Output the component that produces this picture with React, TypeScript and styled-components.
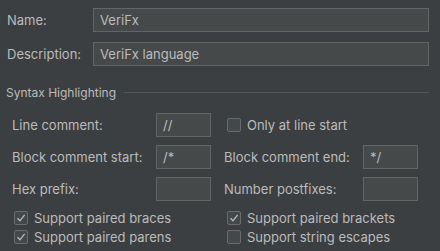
import React from "react";
import styled, { createGlobalStyle } from "styled-components";

const Global = createGlobalStyle`
  html, body { margin: 0; padding: 0; background: #3c3f41; }
  body { font-family: Inter, "Open Sans", sans-serif; color: #bbbbbb; }
  * { box-sizing: border-box; }
`;

const Page = styled.div`
  width: 440px;
  height: 251px;
  padding: 8px 11px 0 7px;
  display: flex;
  flex-direction: column;
  overflow: hidden;
`;

const TopForm = styled.div`
  display: grid;
  grid-template-columns: 86px 1fr;
  row-gap: 10px;
  align-items: center;
`;

const Label = styled.label`
  font-size: 13px;
  color: #bbbbbb;
  white-space: nowrap;
`;

const Field = styled.div<{ $w?: number }>`
  height: 24px;
  width: ${(p) => (p.$w ? `${p.$w}px` : "100%")};
  background: #45494a;
  border: 1px solid #646464;
  font-size: 13px;
  color: #bbbbbb;
  display: flex;
  align-items: center;
  padding: 0 6px;
`;

const SectionHeader = styled.div`
  display: flex;
  align-items: center;
  gap: 8px;
  margin: 18px 0 0 -1px;
  height: 16px;
  font-size: 12px;
  color: #bbbbbb;
`;

const Rule = styled.div`
  flex: 1;
  height: 1px;
  background: #535658;
`;

const Grid = styled.div`
  display: grid;
  grid-template-columns: 144px 55px 13px 139px 55px;
  grid-auto-rows: 24px;
  row-gap: 8px;
  margin: 13px 0 0 5px;
  align-items: center;
`;

const Span2 = styled.div`
  grid-column: 4 / span 2;
  margin-left: 3px;
`;

const Checks = styled.div`
  display: grid;
  grid-template-columns: 213px 1fr;
  grid-auto-rows: 19px;
  margin: 7px 0 0 7px;
  align-items: center;
`;

const CheckRow = styled.div`
  display: flex;
  align-items: center;
  gap: 6px;
  font-size: 13px;
  color: #bbbbbb;
  white-space: nowrap;
`;

const Box = styled.span`
  width: 14px;
  height: 14px;
  border: 1px solid #6b6b6b;
  border-radius: 2px;
  background: #43494a;
  display: inline-flex;
  align-items: center;
  justify-content: center;
  flex: none;
`;

const Check = ({ checked, label }: { checked?: boolean; label: string }) => (
  <CheckRow>
    <Box>
      {checked && (
        <svg width="10" height="10" viewBox="0 0 10 10">
          <path d="M1.5 5.2 L4 7.8 L8.6 1.8" fill="none" stroke="#bbbbbb" strokeWidth="1.3" />
        </svg>
      )}
    </Box>
    {label}
  </CheckRow>
);

export default function App() {
  return (
    <Page>
      <Global />
      <TopForm>
        <Label>Name:</Label>
        <Field>VeriFx</Field>
        <Label>Description:</Label>
        <Field>VeriFx language</Field>
      </TopForm>
      <SectionHeader>
        <span>Syntax Highlighting</span>
        <Rule />
      </SectionHeader>
      <Grid>
        <Label>Line comment:</Label>
        <Field>//</Field>
        <span />
        <Span2>
          <Check label="Only at line start" />
        </Span2>
        <Label>Block comment start:</Label>
        <Field>/*</Field>
        <span />
        <Label>Block comment end:</Label>
        <Field>*/</Field>
        <Label>Hex prefix:</Label>
        <Field />
        <span />
        <Label>Number postfixes:</Label>
        <Field />
      </Grid>
      <Checks>
        <Check checked label="Support paired braces" />
        <Check checked label="Support paired brackets" />
        <Check checked label="Support paired parens" />
        <Check label="Support string escapes" />
      </Checks>
    </Page>
  );
}
